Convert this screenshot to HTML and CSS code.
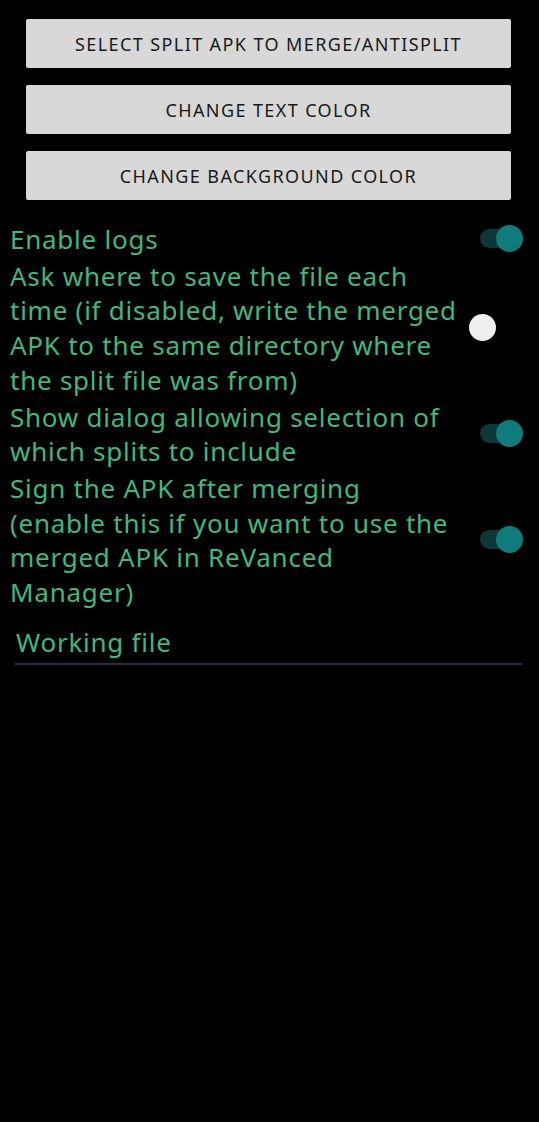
FILE: index.html
```html
<!DOCTYPE html>
<html>
<head>
<meta charset="utf-8">
<link rel="stylesheet" href="styles.css">
</head>
<body>
<div class="screen">
  <div class="buttons">
    <button class="btn">SELECT SPLIT APK TO MERGE/ANTISPLIT</button>
    <button class="btn">CHANGE TEXT COLOR</button>
    <button class="btn">CHANGE BACKGROUND COLOR</button>
  </div>
  <div class="settings">
    <div class="row">
      <div class="label">Enable logs</div>
      <div class="switch on"><span class="track"></span><span class="thumb"></span></div>
    </div>
    <div class="row">
      <div class="label">Ask where to save the file each time (if disabled, write the merged APK to the same directory where the split file was from)</div>
      <div class="switch off"><span class="track"></span><span class="thumb"></span></div>
    </div>
    <div class="row">
      <div class="label">Show dialog allowing selection of which splits to include</div>
      <div class="switch on"><span class="track"></span><span class="thumb"></span></div>
    </div>
    <div class="row">
      <div class="label">Sign the APK after merging<br>(enable this if you want to use the merged APK in ReVanced<br>Manager)</div>
      <div class="switch on"><span class="track"></span><span class="thumb"></span></div>
    </div>
  </div>
  <div class="field">
    <div class="field-text">Working file</div>
  </div>
</div>
</body>
</html>
```

FILE: styles.css
```css
html, body {
  margin: 0;
  padding: 0;
  background: #000;
}
.screen {
  width: 539px;
  height: 1122px;
  background: #000;
  font-family: "Noto Sans", "Open Sans", sans-serif;
}
.buttons {
  display: flex;
  flex-direction: column;
  gap: 17px;
  padding: 19px 28px 0 26px;
}
.btn {
  height: 49px;
  width: 485px;
  border: none;
  border-radius: 2px;
  background: #d7d8d7;
  color: #1a1a1a;
  font-family: "Noto Sans", "Open Sans", sans-serif;
  font-size: 18px;
  letter-spacing: 1.4px;
  padding: 0;
}
.settings {
  display: flex;
  flex-direction: column;
  gap: 2px;
  padding: 22px 0 0 10px;
}
.row {
  display: flex;
  align-items: center;
}
.label {
  width: 460px;
  padding-right: 1px;
  color: #3cba7e;
  font-size: 26px;
  letter-spacing: 0.75px;
  line-height: 34.7px;
}
.switch {
  position: relative;
  flex: none;
  width: 54px;
  height: 27px;
  margin: -2px 0 0 -2px;
}
.track {
  position: absolute;
  left: 11px;
  top: 4px;
  width: 40px;
  height: 19px;
  border-radius: 10px;
  background: #0b3837;
}
.thumb {
  position: absolute;
  top: 0;
  width: 27px;
  height: 27px;
  border-radius: 50%;
}
.on .thumb {
  left: 27px;
  background: #0f7b7a;
}
.off .track {
  background: transparent;
}
.off .thumb {
  left: 0;
  background: #eeeeee;
}
.field {
  margin: 15px 17px 0 15px;
  padding: 0 0 4px 1px;
  border-bottom: 2px solid #2b2e36;
}
.field-text {
  color: #3cba7e;
  font-size: 26px;
  letter-spacing: 0.75px;
  line-height: 34px;
}
```
